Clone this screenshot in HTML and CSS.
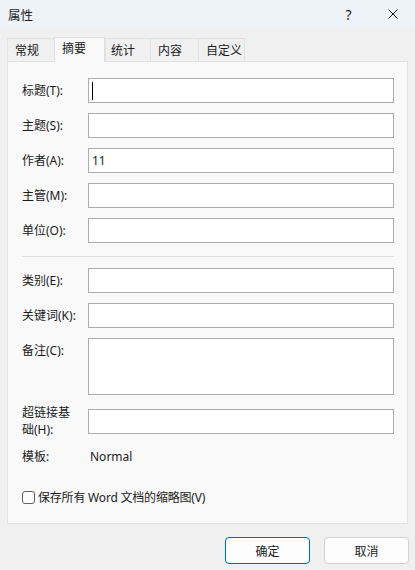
FILE: index.html
```html
<!DOCTYPE html>
<html lang="zh-CN">
<head>
<meta charset="utf-8">
<title>属性</title>
<link rel="stylesheet" href="styles.css">
</head>
<body>
<div class="window">
  <div class="titlebar">
    <div class="tb-title">属性</div>
    <div class="tb-btn tb-help">?</div>
    <div class="tb-btn tb-close">
      <svg width="10" height="10" viewBox="0 0 10 10"><path d="M0.5 0.5 L9.5 9.5 M9.5 0.5 L0.5 9.5" stroke="#1a1a1a" stroke-width="1" fill="none"/></svg>
    </div>
  </div>
  <div class="tabs">
    <div class="tab t1">常规</div>
    <div class="tab active">摘要</div>
    <div class="tab t3">统计</div>
    <div class="tab t4">内容</div>
    <div class="tab t5">自定义</div>
  </div>
  <div class="panel">
    <div class="row"><div class="label">标题(T):</div><div class="field"><span class="caret"></span></div></div>
    <div class="row"><div class="label">主题(S):</div><div class="field"></div></div>
    <div class="row"><div class="label">作者(A):</div><div class="field">11</div></div>
    <div class="row"><div class="label">主管(M):</div><div class="field"></div></div>
    <div class="row last"><div class="label">单位(O):</div><div class="field"></div></div>
    <div class="sep"></div>
    <div class="row"><div class="label">类别(E):</div><div class="field"></div></div>
    <div class="row"><div class="label">关键词(K):</div><div class="field"></div></div>
    <div class="row notes"><div class="label">备注(C):</div><div class="field tall"></div></div>
    <div class="row"><div class="label">超链接基础(H):</div><div class="field"></div></div>
    <div class="row tpl"><div class="label">模板:</div><div class="value">Normal</div></div>
    <div class="check-row"><span class="checkbox"></span><span class="check-label">保存所有 Word 文档的缩略图(V)</span></div>
  </div>
  <div class="footer">
    <div class="btn primary">确定</div>
    <div class="btn">取消</div>
  </div>
</div>
</body>
</html>
```
FILE: styles.css
```css
html, body {
  margin: 0;
  padding: 0;
}
body {
  width: 415px;
  height: 570px;
  background: #f0f0f0;
  font-family: "Noto Sans", "Noto Sans CJK SC", sans-serif;
  font-size: 12px;
  line-height: 17px;
  color: #1b1b1b;
  overflow: hidden;
}
.window {
  width: 415px;
  height: 570px;
}
.titlebar {
  height: 28px;
  background: #eef3f9;
  display: flex;
  align-items: center;
}
.tb-title {
  flex: 1;
  padding-left: 8px;
  font-size: 12.5px;
  font-family: "Noto Sans CJK SC", sans-serif;
}
.tb-btn {
  height: 28px;
  display: flex;
  align-items: center;
  justify-content: center;
}
.tb-help {
  width: 45px;
  font-size: 14px;
  font-family: "Noto Sans", sans-serif;
}
.tb-close {
  width: 44px;
}
.tabs {
  margin-top: 9px;
  padding-left: 7px;
  height: 24px;
  display: flex;
  align-items: flex-end;
  position: relative;
  z-index: 1;
}
.tab {
  box-sizing: border-box;
  height: 23px;
  border: 1px solid #e2e2e2;
  border-bottom: none;
  background: #f0f0f0;
  padding-left: 6px;
  padding-top: 3px;
  line-height: 17px;
}
.t1 { width: 48px; padding-left: 7px; }
.active {
  width: 51px;
  height: 25px;
  margin-left: -1px;
  margin-bottom: -1px;
  background: #f9f9f9;
  border-color: #e0e0e0;
  padding-left: 7px;
  padding-top: 2px;
}
.t3 { width: 46px; padding-left: 5px; }
.t4 { width: 49px; margin-left: -1px; padding-left: 7px; }
.t5 { width: 47px; margin-left: -1px; padding-left: 7px; }
.panel {
  box-sizing: border-box;
  margin: 0 7px;
  height: 463px;
  border: 1px solid #e2e2e2;
  background: #f9f9f9;
  padding: 16px 13px 0 14px;
}
.row {
  display: flex;
  align-items: center;
  margin-bottom: 10px;
}
.row.last { margin-bottom: 0; }
.label {
  width: 58px;
  flex: none;
  margin-right: 8px;
}
.field {
  flex: 1;
  box-sizing: border-box;
  height: 25px;
  border: 1px solid #acacac;
  background: #ffffff;
  display: flex;
  align-items: center;
  padding-left: 3px;
}
.field.tall {
  height: 57px;
}
.caret {
  display: inline-block;
  width: 1px;
  height: 18px;
  background: #000;
}
.notes {
  align-items: flex-start;
  margin-bottom: 9px;
}
.notes .label { padding-top: 4px; }
.sep {
  height: 1px;
  background: #dedede;
  margin: 13px 0 11px 0;
}
.tpl {
  margin-top: 8px;
  margin-bottom: 0;
}
.value {
  padding-left: 2px;
}
.check-row {
  margin-top: 24px;
  display: flex;
  align-items: center;
  height: 17px;
}
.checkbox {
  box-sizing: border-box;
  width: 13px;
  height: 13px;
  border: 1px solid #5f5f5f;
  border-radius: 3px;
  background: #fdfdfd;
  margin-right: 3px;
}
.check-label {
  letter-spacing: -0.2px;
}
.footer {
  margin-top: 13px;
  display: flex;
  justify-content: flex-end;
  gap: 14px;
  padding-right: 6px;
}
.btn {
  box-sizing: border-box;
  width: 85px;
  height: 27px;
  border: 1px solid #d0d0d0;
  border-radius: 4px;
  background: #fdfdfd;
  display: flex;
  align-items: center;
  justify-content: center;
  font-family: "Noto Sans CJK SC", sans-serif;
}
.btn.primary {
  border-color: #0067c0;
}
```
